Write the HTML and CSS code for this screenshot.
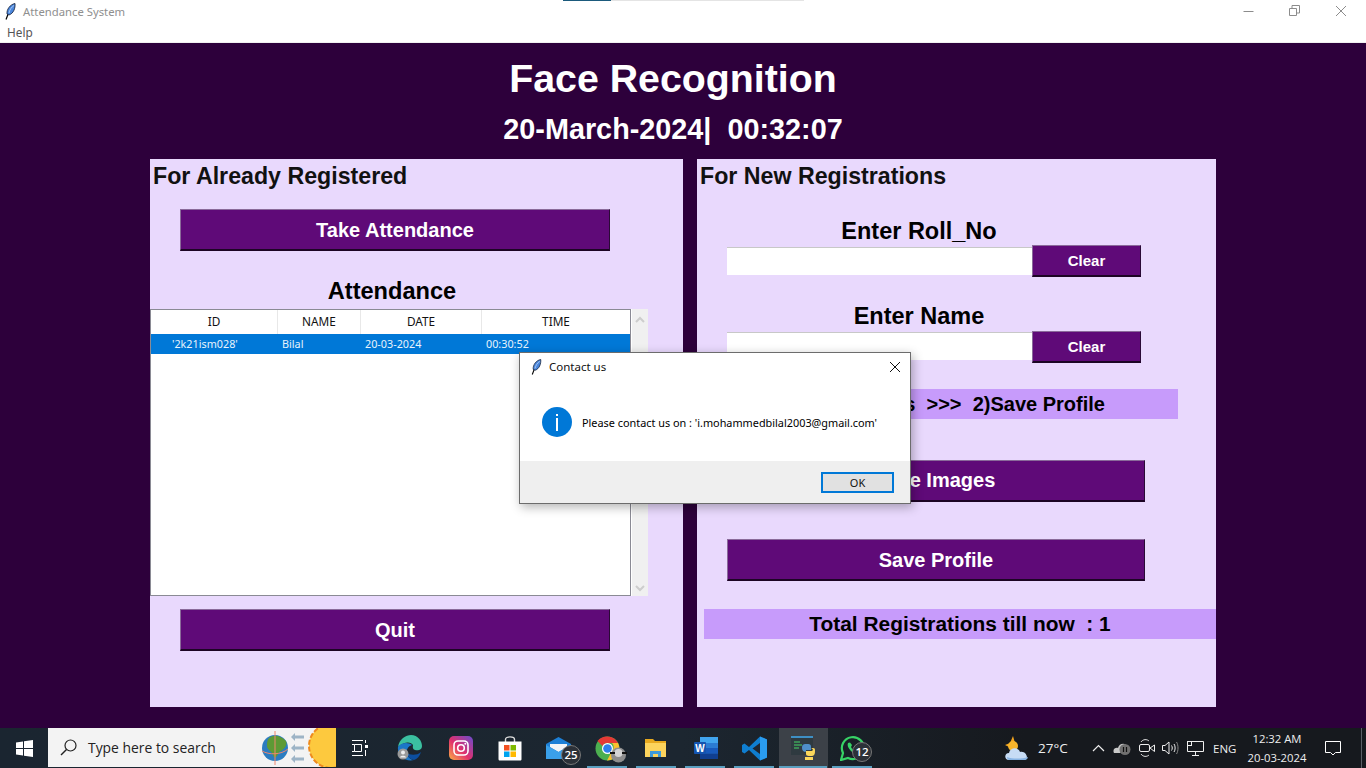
FILE: index.html
```html
<!DOCTYPE html>
<html>
<head>
    <meta charset="UTF-8">
    <title>Attendance System</title>
    <link rel="stylesheet" href="styles.css">
</head>
<body>
    <svg class="defs" width="0" height="0">
        <symbol id="feather" viewBox="0 0 11 17">
            <path d="M1 16.500L3.500 10" stroke="#000" stroke-width="1.200" fill="none"/>
            <path d="M2 11C1.500 6.500 5 1.500 10 0.500C10.500 5 8.500 10.500 4 12Z" fill="#4a86dc" stroke="#111c33" stroke-width="0.800"/>
            <path d="M4 10C4.500 7 6.500 4 9 2.500" stroke="#a9c8f2" stroke-width="1" fill="none"/>
        </symbol>
    </svg>

    <div class="strip"><span class="strip-dark"></span><span class="strip-light"></span></div>

    <header class="titlebar">
        <svg class="title-icon" width="11" height="17"><use href="#feather"/></svg>
        <span class="title-text">Attendance System</span>
        <div class="win-controls">
            <svg width="12" height="12" viewBox="0 0 12 12"><path d="M0.500 6.500H10.500" stroke="#8c8c8c" fill="none"/></svg>
            <svg width="12" height="12" viewBox="0 0 12 12"><path d="M0.500 3.500H7.500V10.500H0.500ZM3 3V0.500H10.500V8H8" stroke="#8c8c8c" fill="none"/></svg>
            <svg width="12" height="12" viewBox="0 0 12 12"><path d="M1 1L11 11M11 1L1 11" stroke="#8c8c8c" fill="none"/></svg>
        </div>
    </header>
    <nav class="menubar">Help</nav>

    <main class="app">
        <h1 class="app-title">Face Recognition</h1>
        <div class="app-date">20-March-2024|&nbsp; 00:32:07</div>

        <div class="panels">
            <section class="panel panel-left">
                <h2 class="panel-title">For Already Registered</h2>
                <button class="btn btn-wide btn-take">Take Attendance</button>
                <h3 class="table-title">Attendance</h3>
                <div class="table-wrap">
                    <div class="table">
                        <div class="row row-head">
                            <span>ID</span>
                            <span>NAME</span>
                            <span>DATE</span>
                            <span>TIME</span>
                        </div>
                        <div class="row row-selected">
                            <span class="cell-id">'2k21ism028'</span>
                            <span>Bilal</span>
                            <span>20-03-2024</span>
                            <span>00:30:52</span>
                        </div>
                    </div>
                    <div class="scrollbar">
                        <svg width="10" height="7" viewBox="0 0 10 7"><path d="M1 6L5 2L9 6" stroke="#cdcdcd" stroke-width="2" fill="none"/></svg>
                        <svg width="10" height="7" viewBox="0 0 10 7"><path d="M1 1L5 5L9 1" stroke="#cdcdcd" stroke-width="2" fill="none"/></svg>
                    </div>
                </div>
                <button class="btn btn-wide btn-quit">Quit</button>
            </section>

            <section class="panel panel-right">
                <h2 class="panel-title">For New Registrations</h2>
                <div class="field-label field-label-first">Enter Roll_No</div>
                <div class="field-row">
                    <input class="field-input field-input-first" type="text">
                    <button class="btn btn-clear">Clear</button>
                </div>
                <div class="field-label field-label-second">Enter Name</div>
                <div class="field-row field-row-second">
                    <input class="field-input" type="text">
                    <button class="btn btn-clear">Clear</button>
                </div>
                <div class="band band-steps">1)Take Images&nbsp; &gt;&gt;&gt;&nbsp; 2)Save Profile</div>
                <button class="btn btn-action btn-images">Take Images</button>
                <button class="btn btn-action btn-save">Save Profile</button>
                <div class="band band-total">Total Registrations till now&nbsp; : 1</div>
            </section>
        </div>
    </main>

    <div class="dialog">
        <div class="dialog-head">
            <svg width="11" height="16"><use href="#feather"/></svg>
            <span class="dialog-title">Contact us</span>
            <svg class="dialog-close" width="12" height="12" viewBox="0 0 12 12"><path d="M1 1L11 11M11 1L1 11" stroke="#111" fill="none"/></svg>
        </div>
        <div class="dialog-body">
            <svg width="30" height="30" viewBox="0 0 30 30">
                <circle cx="15" cy="15" r="15" fill="#0078d7"/>
                <rect x="14" y="7" width="2" height="2" fill="#fff"/>
                <rect x="14" y="11" width="2" height="13" fill="#fff"/>
            </svg>
            <span class="dialog-msg">Please contact us on : 'i.mohammedbilal2003@gmail.com'</span>
        </div>
        <div class="dialog-foot"><button class="dialog-ok">OK</button></div>
    </div>

    <footer class="taskbar">
        <div class="start">
            <svg width="17" height="17" viewBox="0 0 17 17"><path d="M0 2.400L7 1.400V8H0ZM8 1.200L17 0V8H8ZM0 9H7V15.600L0 14.600ZM8 9H17V17L8 15.800Z" fill="#fff"/></svg>
        </div>
        <div class="search">
            <svg width="17" height="17" viewBox="0 0 17 17"><circle cx="10.500" cy="6.500" r="5.500" fill="none" stroke="#222" stroke-width="1.200"/><path d="M6.500 10.500L1 16" stroke="#222" stroke-width="1.400"/></svg>
            <span class="search-text">Type here to search</span>
            <svg class="search-art" width="75" height="39" viewBox="0 0 75 39">
                <circle cx="14" cy="20" r="13" fill="#2b7cc0"/>
                <path d="M8 10C13 6 20 8 25 13C27 18 22 22 18 24C16 30 13 31 12 27C11 23 6 22 6 18C6 15 6 12 8 10Z" fill="#5d9a35"/>
                <path d="M14 3V37" stroke="#f0866e" stroke-width="1"/>
                <path d="M1 23C8 27 20 27 27 21" stroke="#f0866e" stroke-width="1" fill="none"/>
                <path d="M33 9H43M33 20H43M33 31H43" stroke="#9db4c6" stroke-width="3"/>
                <path d="M34 5L30 9L34 13M34 16L30 20L34 24M34 27L30 31L34 35" fill="#9db4c6"/>
                <circle cx="70" cy="18" r="22" fill="#fdc93e" stroke="#ee8a1e" stroke-width="2" stroke-dasharray="5 2"/>
            </svg>
        </div>
        <div class="tasks">
            <div class="task">
                <svg class="task-view" width="17" height="16" viewBox="0 0 17 16"><path d="M0 0.500H11M0 15.500H11M2.500 4.500H9.500V11.500H2.500ZM0 4.500H2.500M0 11.500H2.500" stroke="#fff" fill="none"/><path d="M13.500 0V3M13.500 10V16" stroke="#fff"/><rect x="13" y="5" width="3" height="3" fill="#fff"/></svg>
            </div>
            <div class="task task-edge">
                <svg width="26" height="26" viewBox="0 0 26 26">
                    <path d="M1 12C2 4 9 0 14 0C21 0 25 6 25 11C25 15 21 16 18 15C15 14 16 11 16 10C14 7 8 6 1 12Z" fill="#3bc0a0"/>
                    <path d="M1 12C4 7 12 7 15 10C11 11 9 15 10 19C11 23 15 25 17 25C8 27 0 21 1 12Z" fill="#1b77c8"/>
                    <path d="M17 25C13 24 10 21 10 18C12 20 20 21 24 17C23 21 20 24 17 25Z" fill="#0c4fa0"/>
                    <circle cx="6" cy="19" r="5.500" fill="#9a9a9a"/><circle cx="6" cy="17.500" r="2" fill="#eee"/><path d="M3 22.500C3 20 9 20 9 22.500Z" fill="#eee"/>
                </svg>
            </div>
            <div class="task">
                <svg width="24" height="24" viewBox="0 0 24 24">
                    <defs><linearGradient id="insta" x1="0" y1="1" x2="1" y2="0"><stop offset="0" stop-color="#fcb045"/><stop offset="0.45" stop-color="#e1306c"/><stop offset="1" stop-color="#6a4cd0"/></linearGradient></defs>
                    <rect width="24" height="24" rx="5" fill="url(#insta)"/>
                    <rect x="5" y="5" width="14" height="14" rx="4" fill="none" stroke="#fff" stroke-width="1.600"/>
                    <circle cx="12" cy="12" r="3.300" fill="none" stroke="#fff" stroke-width="1.600"/>
                    <circle cx="16.300" cy="7.700" r="1" fill="#fff"/>
                </svg>
            </div>
            <div class="task">
                <svg width="24" height="25" viewBox="0 0 24 25">
                    <path d="M7.500 6V3.500C7.500 0 16.500 0 16.500 3.500V6" stroke="#ddd" stroke-width="1.400" fill="none"/>
                    <path d="M0.500 5.500H23.500V23C23.500 24 23 24.500 22 24.500H2C1 24.500 0.500 24 0.500 23Z" fill="#fff"/>
                    <rect x="6" y="9" width="5.500" height="5.500" fill="#f25022"/><rect x="12.500" y="9" width="5.500" height="5.500" fill="#7fba00"/>
                    <rect x="6" y="15.500" width="5.500" height="5.500" fill="#00a4ef"/><rect x="12.500" y="15.500" width="5.500" height="5.500" fill="#ffb900"/>
                </svg>
            </div>
            <div class="task">
                <svg width="25" height="22" viewBox="0 0 25 22">
                    <path d="M0 7L12.500 0L25 7V22H0Z" fill="#1c7fd6"/>
                    <path d="M4 7H21V10L12.500 15L4 10Z" fill="#f2f4f6"/>
                    <path d="M0 8L12.500 15L25 8V22H0Z" fill="#3aa0ea"/>
                </svg>
                <span class="badge">25</span>
            </div>
            <div class="task task-open">
                <svg width="25" height="25" viewBox="0 0 25 25">
                    <circle cx="12.500" cy="12.500" r="12" fill="#4caf50"/>
                    <path d="M12.500 0.500A12 12 0 0 1 23 7H12.500A5.500 5.500 0 0 0 7.500 10L2.500 5A12 12 0 0 1 12.500 0.500Z" fill="#e53935"/>
                    <path d="M23 7A12 12 0 0 1 12 24.500L17 15A5.500 5.500 0 0 0 17 7Z" fill="#fbc02d"/>
                    <circle cx="12.500" cy="12.500" r="5.500" fill="#fff"/><circle cx="12.500" cy="12.500" r="4.300" fill="#2f80ed"/>
                </svg>
                <svg class="task-avatar" width="17" height="16" viewBox="0 0 17 16"><circle cx="8.500" cy="8" r="7.500" fill="#8e8e8e"/><circle cx="8.500" cy="6" r="4" fill="#d4d4d4"/><path d="M0 6H5M12 6H17" stroke="#111" stroke-width="2"/></svg>
            </div>
            <div class="task task-open">
                <svg width="23" height="20" viewBox="0 0 23 20">
                    <path d="M0 1H8L10 3H21V18H0Z" fill="#e8a91e"/>
                    <rect x="0" y="5" width="21" height="14" fill="#fcd35c"/>
                    <path d="M5 19V13H16V19H13V16H8V19Z" fill="#3e9ad9"/>
                </svg>
            </div>
            <div class="task task-open">
                <svg width="24" height="22" viewBox="0 0 24 22">
                    <rect x="6" y="0" width="18" height="22" rx="1" fill="#2b7cd3"/>
                    <rect x="6" y="0" width="18" height="6" fill="#41a5ee"/>
                    <rect x="6" y="11" width="18" height="5.500" fill="#185abd"/>
                    <rect x="6" y="16.500" width="18" height="5.500" fill="#103f91"/>
                    <rect x="0" y="5" width="12" height="12" rx="1" fill="#1454b0"/>
                    <text x="6" y="14.500" class="word-letter">W</text>
                </svg>
            </div>
            <div class="task task-open">
                <svg width="25" height="25" viewBox="0 0 25 25">
                    <path d="M18 0.500L25 3.500V21.500L18 24.500L7 14L2.500 17.500L0 16V9L2.500 7.500L7 11Z" fill="#0f7ed0"/>
                    <path d="M18 7L10.500 12.500L18 18Z" fill="#1f2630"/>
                    <path d="M18 0.500L25 3.500V21.500L18 24.500Z" fill="#2a9cf0"/>
                </svg>
            </div>
            <div class="task task-open task-active">
                <svg width="25" height="25" viewBox="0 0 25 25">
                    <rect x="0" y="0" width="22" height="19" fill="#2f3a40"/>
                    <rect x="0" y="0" width="22" height="2" fill="#3e8fc4"/>
                    <path d="M3 6H9M3 9H11M3 12H8" stroke="#3fa35a" stroke-width="1.300"/>
                    <path d="M11 12C11 8 13 8 16 8C20 8 20 9 20 12V14H15V15H20C16 16 11 17 11 12Z" fill="#4f8fc9"/>
                    <path d="M24 15C24 20 22 20 19 20C15 20 15 19 15 17V15H20C22 15 23 13 20 12H22C24 12 24 13 24 15Z" fill="#fbd75b"/>
                    <path d="M14 21H22V24H14Z" fill="#fbd75b"/>
                </svg>
            </div>
            <div class="task task-open">
                <svg width="25" height="25" viewBox="0 0 25 25">
                    <path d="M1 24L3 17A11 11 0 1 1 8 22Z" fill="none" stroke="#37d366" stroke-width="2.200"/>
                    <path d="M8 7C7 9 8 12 11 15C14 18 17 18.500 19 17L17 14L15 15C13 14 11.500 12.500 11 11L12 9L10 6.500Z" fill="#37d366"/>
                </svg>
                <span class="badge badge-whatsapp">12</span>
            </div>
        </div>
        <div class="tray">
            <svg class="tray-weather" width="26" height="26" viewBox="0 0 26 26">
                <path d="M9 1L11 8L7 13L1 10L6 8Z" fill="#f3a41f"/>
                <circle cx="9" cy="11" r="5" fill="#f7b52c"/>
                <path d="M5 25C0 25 0 18 5 18C6 12 15 12 16 17C22 15 26 25 20 25Z" fill="#c7dcf5"/>
                <path d="M3 22C8 24 18 24 24 22C24 24 22 25 20 25H5C4 25 3 24 3 22Z" fill="#88b4e4"/>
            </svg>
            <span class="tray-temp">27°C</span>
            <svg class="tray-chevron" width="13" height="8" viewBox="0 0 13 8"><path d="M1 7L6.500 1.500L12 7" stroke="#eee" stroke-width="1.200" fill="none"/></svg>
            <svg class="tray-cloud" width="18" height="14" viewBox="0 0 18 14"><path d="M1 12C-1 8 3 6 5 7C6 2 13 1 14 6L7 12Z" fill="#c8c8c8"/><circle cx="12" cy="8.500" r="5.500" fill="#707070"/><path d="M10.500 6V11M13.500 6V11" stroke="#111" stroke-width="1.200"/></svg>
            <svg class="tray-camera" width="17" height="18" viewBox="0 0 17 18"><path d="M2 3C4 0 8 0 10 2M2 15C4 18 8 18 10 16" stroke="#ddd" fill="none"/><rect x="0.500" y="5.500" width="10" height="7" rx="1.500" stroke="#eee" fill="none"/><path d="M11 9L15.500 6V12.500Z" stroke="#eee" fill="none"/></svg>
            <svg class="tray-volume" width="17" height="14" viewBox="0 0 17 14"><path d="M0.500 4.500H3L7 1V13L3 9.500H0.500Z" stroke="#eee" fill="none"/><path d="M9.500 4.500C10.500 6 10.500 8 9.500 9.500M12 3C13.500 5 13.500 9 12 11" stroke="#eee" fill="none"/><path d="M14.500 1C16.500 4 16.500 10 14.500 13" stroke="#888" fill="none"/></svg>
            <svg class="tray-network" width="17" height="15" viewBox="0 0 17 15"><path d="M3.500 0.500H16.500V10.500H0.500V0.500H3.500M8.500 10.500V14M5 14.500H12" stroke="#eee" fill="none"/><rect x="0.500" y="0.500" width="4" height="4" fill="#16191e" stroke="#eee"/></svg>
            <span class="tray-lang">ENG</span>
            <div class="clock"><span>12:32 AM</span><span>20-03-2024</span></div>
            <svg class="tray-note" width="16" height="15" viewBox="0 0 16 15"><path d="M0.500 0.500H15.500V11.500H10.500L8 14L5.500 11.500H0.500Z" stroke="#fff" fill="none"/></svg>
            <span class="show-desktop"></span>
        </div>
    </footer>
</body>
</html>
```

FILE: styles.css
```css
* { box-sizing: border-box; }
html, body { margin: 0; padding: 0; }
body { position: relative; width: 1366px; height: 768px; overflow: hidden; background: #2d003b; font-family: "Liberation Sans", Arial, sans-serif; }
.defs { position: absolute; }

.strip { position: absolute; left: 563px; top: 0; display: flex; height: 1px; }
.strip-dark { width: 48px; background: #1b5a7c; }
.strip-light { width: 193px; background: #e4e4e4; }

.titlebar { height: 22px; background: #fff; display: flex; align-items: center; padding-left: 5px; font-family: "Noto Sans", sans-serif; }
.title-icon { margin-right: 7px; }
.title-text { font-size: 11.300px; color: #8f8f8f; }
.win-controls { margin-left: auto; display: flex; gap: 34px; padding-right: 19px; align-items: center; }
.menubar { height: 20px; background: #fff; padding: 0 0 0 7px; font-size: 11.800px; line-height: 20px; color: #555; font-family: "Noto Sans", sans-serif; }

.app { height: 686px; border-top: 1px solid #f0f0f0; background: #2d003b; }
.app-title { margin: 0; height: 70px; padding-top: 13px; width: 1346px; text-align: center; font-size: 39.300px; line-height: 44px; font-weight: bold; color: #fff; }
.app-date { height: 46px; width: 1346px; text-align: center; font-size: 28.800px; line-height: 32px; font-weight: bold; color: #fff; }

.panels { display: flex; gap: 14px; margin-left: 150px; height: 548px; }
.panel { background: #e9d9fd; height: 548px; }
.panel-left { width: 533px; }
.panel-right { width: 519px; }
.panel-title { margin: 0; height: 34px; padding-left: 3px; font-size: 23.200px; line-height: 34px; color: #111; }

.btn { display: block; border: 0; border-right: 1px solid #2a0a36; border-bottom: 2px solid #1c0524; border-left: 1px solid #8a6a9a; border-top: 1px solid #8a6a9a; padding: 0; background: #5f0a78; color: #fff; font-family: "Liberation Sans", Arial, sans-serif; font-weight: bold; font-size: 20px; }
.btn-wide { width: 430px; height: 42px; margin-left: 30px; padding-top: 2px; }
.btn-take { margin-top: 16px; }
.btn-quit { margin-top: 13px; }

.table-title { margin: 25px 0 3px; width: 484px; height: 30px; text-align: center; font-size: 23.600px; line-height: 30px; color: #000; }
.table-wrap { display: flex; width: 498px; height: 287px; background: #fff; }
.table { width: 481px; height: 287px; background: #fff; border: 1px solid #8a8a94; }
.scrollbar { width: 16px; margin-left: 1px; background: #f0f0f0; display: flex; flex-direction: column; justify-content: space-between; align-items: center; padding: 7px 0 4px; }
.row { display: grid; grid-template-columns: 127px 83px 121px 148px; font-family: "Noto Sans", sans-serif; }
.row-head { height: 24px; line-height: 23px; font-size: 11.800px; color: #111; text-align: center; }
.row-head span { border-right: 1px solid #e8e8e8; }
.row-head span:last-child { border-right: 0; }
.row-selected { height: 20px; line-height: 19px; font-size: 10.800px; background: #0078d7; color: #e8f3fc; }
.row-selected span { padding-left: 4px; }
.row-selected .cell-id { padding-left: 21px; }

.field-label { width: 384px; margin-left: 30px; height: 28px; text-align: center; font-size: 23.500px; line-height: 28px; font-weight: bold; color: #000; }
.field-label-first { margin-top: 24px; }
.field-label-second { margin-top: 25px; }
.field-row { display: flex; margin-left: 30px; height: 32px; }
.field-row-second { margin-top: 1px; }
.field-input { width: 305px; height: 28px; margin-top: 1px; border: 0; border-top: 1px solid #c8c8c8; background: #fff; }
.field-input-first { margin-top: 2px; }
.btn-clear { width: 109px; height: 32px; font-size: 15px; }

.band { background: #c79bfb; font-weight: bold; text-align: center; color: #000; height: 30px; line-height: 30px; }
.band-steps { width: 474px; margin: 26px 0 0 7px; padding-left: 2px; font-size: 20px; }
.band-total { width: 512px; margin: 28px 0 0 7px; font-size: 20.900px; }
.btn-action { width: 418px; height: 42px; margin-left: 30px; }
.btn-images { margin-top: 41px; }
.btn-save { margin-top: 37px; padding-top: 2px; }

.dialog { position: absolute; left: 519px; top: 352px; width: 392px; height: 152px; background: #fff; border: 1px solid #6c6c6c; box-shadow: 2px 3px 10px rgba(0, 0, 0, 0.3); font-family: "Noto Sans", sans-serif; display: flex; flex-direction: column; }
.dialog-head { display: flex; align-items: center; height: 29px; padding: 0 9px 2px 11px; font-size: 11.500px; color: #111; }
.dialog-title { margin-left: 7px; }
.dialog-close { margin-left: auto; }
.dialog-body { flex: 1; display: flex; align-items: center; padding-left: 22px; }
.dialog-msg { margin: 1px 0 0 10px; font-size: 10.870px; color: #000; white-space: nowrap; }
.dialog-foot { height: 42px; background: #efefef; display: flex; justify-content: flex-end; padding: 11px 16px 0 0; }
.dialog-ok { width: 73px; height: 21px; border: 2px solid #0078d7; background: #e1e1e1; padding: 0; font-family: "Noto Sans", sans-serif; font-size: 11px; color: #111; }

.taskbar { display: flex; height: 40px; background: linear-gradient(to right, #1a2530, #1c2630 50%, #16191e 75%); color: #eee; font-family: "Open Sans", sans-serif; }
.start { width: 48px; display: flex; align-items: center; justify-content: center; }
.search { position: relative; width: 288px; height: 39px; background: #f3f3f3; display: flex; align-items: center; padding-left: 12px; overflow: hidden; }
.search-text { margin-left: 11px; font-size: 13.900px; color: #222; }
.search-art { position: absolute; left: 213px; top: 0; }
.tasks { display: flex; margin-left: 2px; }
.task { position: relative; width: 49px; height: 40px; display: flex; align-items: center; justify-content: center; }
.task-view { margin-right: 5px; }
.task-edge svg { margin-right: 3px; }
.task-open::after { content: ""; position: absolute; left: 4px; right: 5px; bottom: 0; height: 2px; background: #5a9fc0; }
.task-active { background: #3c4148; }
.task-active::after { left: 0; right: 1px; }
.badge { position: absolute; left: 27px; top: 17px; width: 20px; height: 20px; border-radius: 50%; border: 1px solid #777; background: #2c3138; color: #fff; font-size: 11.500px; font-weight: 600; line-height: 18px; text-align: center; }
.badge-whatsapp { left: 24px; top: 14px; }
.task-avatar { position: absolute; left: 27px; top: 19px; }
.word-letter { font-family: "Liberation Sans", sans-serif; font-size: 10px; font-weight: bold; fill: #fff; text-anchor: middle; }

.tray { margin-left: auto; display: flex; align-items: center; width: 362px; }
.tray svg { flex-shrink: 0; }
.tray-temp { margin-left: 8px; width: 30px; font-size: 13.500px; white-space: nowrap; }
.tray-chevron { margin-left: 24px; }
.tray-cloud { margin-left: 8px; }
.tray-camera { margin-left: 8px; }
.tray-volume { margin-left: 6px; }
.tray-network { margin-left: 8px; }
.tray-lang { margin-left: 9px; width: 23px; font-size: 11.500px; white-space: nowrap; }
.clock { flex-shrink: 0; width: 70px; margin-left: 6px; display: flex; flex-direction: column; align-items: center; font-size: 11.300px; line-height: 19px; }
.tray-note { margin-left: 13px; }
.show-desktop { flex-shrink: 0; margin-left: 20px; width: 1px; height: 40px; background: #5a5f66; }
```
